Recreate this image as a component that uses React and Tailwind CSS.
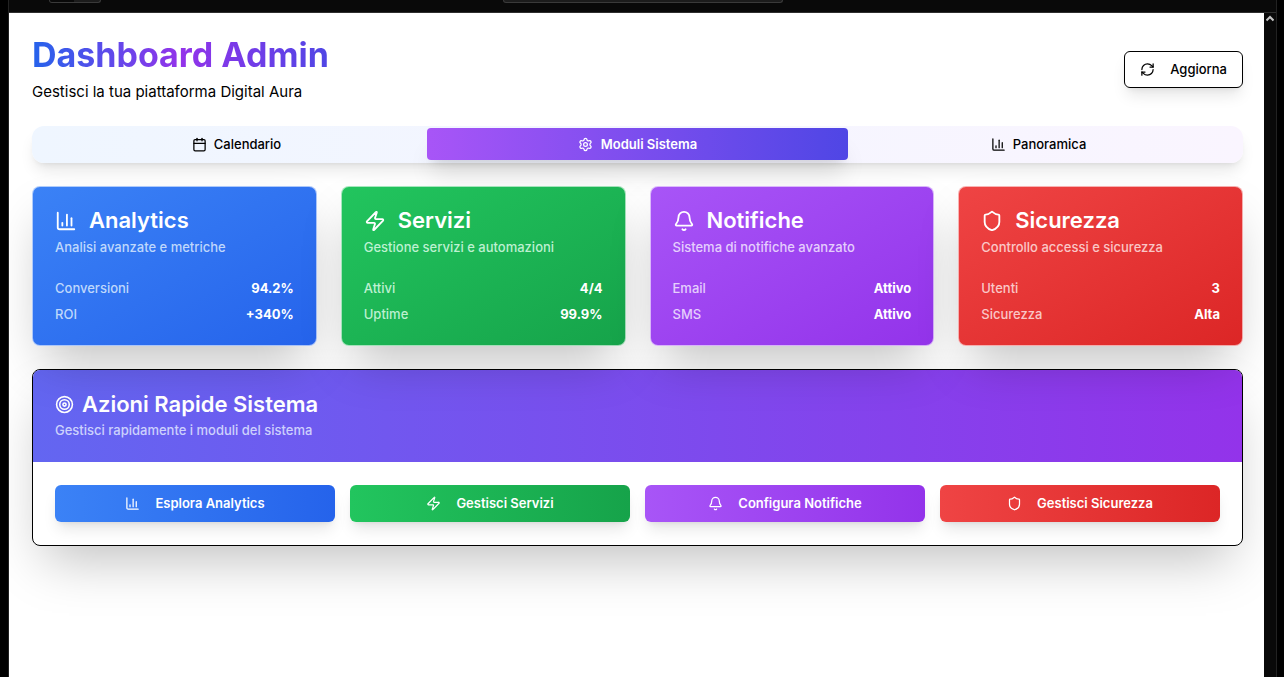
import React from "react";
import { Bell, Calendar, ChartColumn, RefreshCw, Settings, Shield, Target, Zap } from "lucide-react";

const tabs = [
  { label: "Calendario", Icon: Calendar },
  { label: "Moduli Sistema", Icon: Settings, active: true },
  { label: "Panoramica", Icon: ChartColumn },
];

const modules = [
  {
    title: "Analytics",
    text: "Analisi avanzate e metriche",
    action: "Esplora Analytics",
    Icon: ChartColumn,
    colors: "from-[#3b82f6] to-[#2563eb]",
    soft: "text-[#dbeafe]/85",
    rows: [["Conversioni", "94.2%"], ["ROI", "+340%"]],
  },
  {
    title: "Servizi",
    text: "Gestione servizi e automazioni",
    action: "Gestisci Servizi",
    Icon: Zap,
    colors: "from-[#22c55e] to-[#16a34a]",
    soft: "text-[#dcfce7]/85",
    rows: [["Attivi", "4/4"], ["Uptime", "99.9%"]],
  },
  {
    title: "Notifiche",
    text: "Sistema di notifiche avanzato",
    action: "Configura Notifiche",
    Icon: Bell,
    colors: "from-[#a855f7] to-[#9333ea]",
    soft: "text-[#f3e8ff]/85",
    rows: [["Email", "Attivo"], ["SMS", "Attivo"]],
  },
  {
    title: "Sicurezza",
    text: "Controllo accessi e sicurezza",
    action: "Gestisci Sicurezza",
    Icon: Shield,
    colors: "from-[#ef4444] to-[#dc2626]",
    soft: "text-[#fee2e2]/85",
    rows: [["Utenti", "3"], ["Sicurezza", "Alta"]],
  },
];

function TopBar() {
  return (
    <div className="grid h-[13px] grid-cols-[1fr_280px_1fr] items-start border-b border-[#2e2e2e] bg-[#090909]">
      <div className="ml-10 flex h-[3px] w-[52px] overflow-hidden rounded-b border border-t-0 border-[#3a3a3a] bg-[#1c1c1c]">
        <div className="w-6 bg-[#090909]" />
      </div>
      <div className="h-[3px] rounded-b border border-t-0 border-[#3a3a3a] bg-[#1c1c1c]" />
    </div>
  );
}

function ModuleCard({ title, text, Icon, colors, soft, rows }) {
  return (
    <article className={`rounded-lg border border-white/60 bg-linear-to-br/srgb bg-origin-border px-[22px] pt-[22px] pb-[21px] text-white shadow-2xl ${colors}`}>
      <h2 className="flex items-center gap-3 text-[22px] leading-[23px] font-semibold">
        <Icon className="size-[22px]" />
        {title}
      </h2>
      <p className={`mt-[5px] text-[13px] leading-5 font-medium ${soft}`}>{text}</p>
      <dl className="mt-[21px] flex flex-col gap-1.5 text-[13px] leading-5">
        {rows.map(([name, value]) => (
          <div key={name} className="flex justify-between">
            <dt className={`font-medium ${soft}`}>{name}</dt>
            <dd className="font-bold">{value}</dd>
          </div>
        ))}
      </dl>
    </article>
  );
}

export default function App() {
  return (
    <div className="flex min-h-screen flex-col bg-black pr-[7px] pl-2 font-['Inter',sans-serif] text-black">
      <div className="flex flex-1 flex-col border-x border-[#222]">
        <TopBar />
        <div className="flex flex-1">
          <main className="flex min-w-0 flex-1 flex-col gap-[23px] overflow-hidden bg-white py-[23px] pr-[21px] pl-[23px]">
            <header className="flex items-center justify-between">
              <div>
                <h1 className="w-fit bg-linear-to-r/srgb from-[#2563eb] via-[#9333ea] to-[#4f46e5] bg-clip-text text-[34px] leading-[38px] font-bold text-transparent">
                  Dashboard Admin
                </h1>
                <p className="mt-1.5 text-[15px] leading-[23px]">Gestisci la tua piattaforma Digital Aura</p>
              </div>
              <button className="flex h-[37px] items-center gap-[15px] rounded-md border border-black bg-white px-[15px] text-[13px] font-medium shadow-lg">
                <RefreshCw className="size-[15px]" />
                Aggiorna
              </button>
            </header>

            <nav role="tablist" className="grid h-[37px] grid-cols-3 items-start rounded-xl bg-linear-to-r/srgb from-[#eff6ff] to-[#faf5ff] px-1 pt-0.5 shadow-lg">
              {tabs.map(({ label, Icon, active }) => (
                <button
                  key={label}
                  role="tab"
                  aria-selected={Boolean(active)}
                  className={
                    active
                      ? "relative -mx-2.5 flex h-8 items-center justify-center gap-2 rounded-sm bg-linear-to-r/srgb from-[#a855f7] to-[#4f46e5] text-[13px] leading-5 font-semibold text-white shadow-xl"
                      : "flex h-8 items-center justify-center gap-[7px] text-[13px] leading-5 font-medium"
                  }
                >
                  <Icon className="size-[15px]" />
                  {label}
                </button>
              ))}
            </nav>

            <section className="relative grid grid-cols-4 gap-6">
              {modules.map((module) => (
                <ModuleCard key={module.title} {...module} />
              ))}
            </section>

            <section className="overflow-hidden rounded-lg border border-black bg-white shadow-2xl">
              <div className="bg-linear-to-r/srgb from-[#6366f1] to-[#9333ea] px-[22px] pt-[23px] pb-[22px] text-white">
                <h2 className="flex items-center gap-2 text-[22px] leading-[23px] font-semibold">
                  <Target className="size-[19px]" />
                  Azioni Rapide Sistema
                </h2>
                <p className="mt-1 text-[13px] leading-5 font-medium text-[#e0e7ff]/85">Gestisci rapidamente i moduli del sistema</p>
              </div>
              <div className="grid grid-cols-4 gap-[15px] px-[22px] py-[23px]">
                {modules.map(({ action, Icon, colors }) => (
                  <button
                    key={action}
                    className={`flex h-[37px] items-center justify-center gap-[15px] rounded-md bg-linear-to-r/srgb text-[13px] font-semibold text-white shadow-lg ${colors}`}
                  >
                    <Icon className="size-[15px]" />
                    {action}
                  </button>
                ))}
              </div>
            </section>
          </main>
          <div className="flex w-3 shrink-0 justify-center bg-[#090909] pt-[2px]">
            <svg className="h-[7px] w-2" viewBox="0 0 8 7" fill="none" stroke="#c4c4c4" strokeWidth="2">
              <path d="M.5 5.5 4 2l3.5 3.5" />
            </svg>
          </div>
        </div>
      </div>
    </div>
  );
}
